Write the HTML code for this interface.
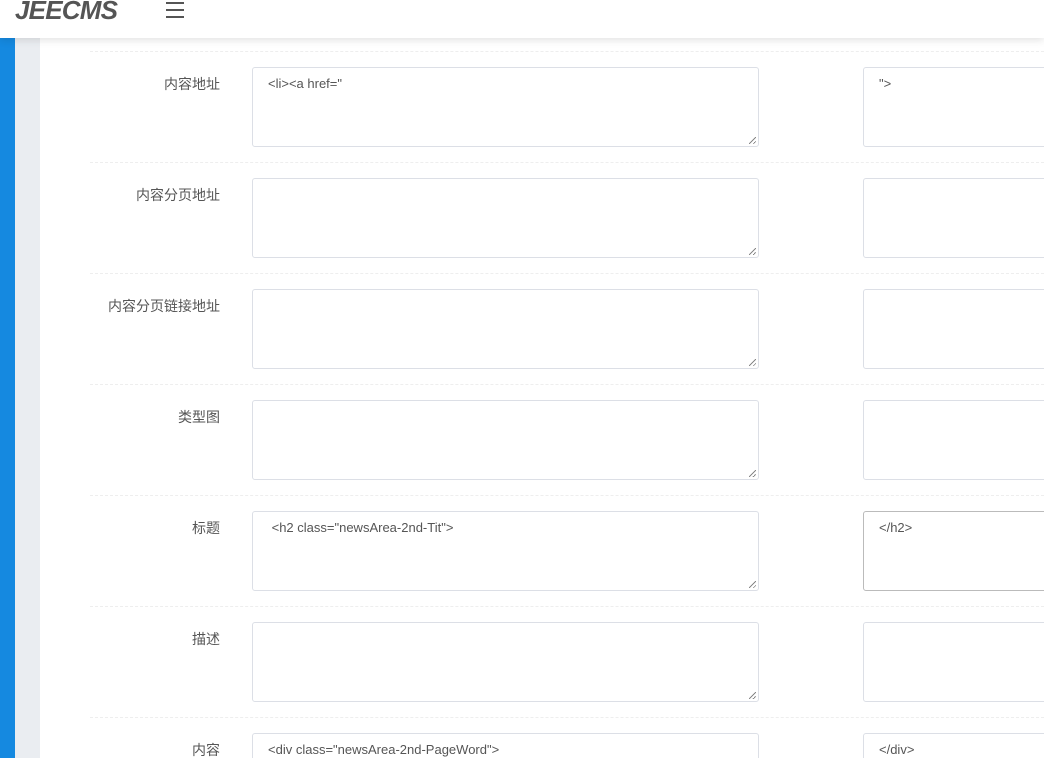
<!DOCTYPE html><html style="width:1044px;height:758px;overflow:hidden"><head><meta charset="utf-8"><style>
body{margin:0;width:1044px;height:758px;overflow:hidden;background:#fff;font-family:"Liberation Sans","Noto Sans CJK SC",sans-serif;position:relative}
.hdr{position:absolute;left:0;top:0;width:1044px;height:38px;background:#fff;box-shadow:0 2px 8px rgba(0,0,0,.12);z-index:2}
.logo{position:absolute;left:15px;top:-5px;font-size:26px;font-weight:bold;font-style:italic;color:#555;letter-spacing:-0.8px}
.ham{position:absolute;left:166px;top:2px;width:18px}
.ham i{display:block;height:2px;background:#555;margin-bottom:5px}
.sb{position:absolute;left:0;top:38px;width:15px;height:720px;background:#1589e0}
.gb{position:absolute;left:15px;top:38px;width:25px;height:720px;background:#eaedf1}
.row{position:absolute;left:90px;width:954px;height:111px;border-top:1px dashed #eee}
.lab{position:absolute;right:824px;top:22px;font-size:14px;color:#555;white-space:nowrap}
.ta{position:absolute;top:15px;border:1px solid #dcdfe6;border-radius:3px;font-size:13px;color:#555;padding:8px 0 0 15px;box-sizing:border-box;height:80px}
.a{left:162px;width:507px}.b{left:773px;width:200px}
.grip{position:absolute;right:2px;bottom:2px;width:7px;height:7px;background:linear-gradient(135deg,transparent 45%,#888 45%,#888 55%,transparent 55%,transparent 75%,#888 75%,#888 85%,transparent 85%)}
</style></head><body>
<div class="hdr"><div class="logo">JEECMS</div><div class="ham"><i></i><i></i><i></i></div></div>
<div class="sb"></div><div class="gb"></div>
<div class="row" style="top:51px"><div class="lab">内容地址</div><div class="ta a">&lt;li&gt;&lt;a href="<div class="grip"></div></div><div class="ta b">"&gt;</div></div>
<div class="row" style="top:162px"><div class="lab">内容分页地址</div><div class="ta a"><div class="grip"></div></div><div class="ta b"></div></div>
<div class="row" style="top:273px"><div class="lab">内容分页链接地址</div><div class="ta a"><div class="grip"></div></div><div class="ta b"></div></div>
<div class="row" style="top:384px"><div class="lab">类型图</div><div class="ta a"><div class="grip"></div></div><div class="ta b"></div></div>
<div class="row" style="top:495px"><div class="lab">标题</div><div class="ta a">&nbsp;&lt;h2 class="newsArea-2nd-Tit"&gt;<div class="grip"></div></div><div class="ta b" style="border-color:#bbb">&lt;/h2&gt;</div></div>
<div class="row" style="top:606px"><div class="lab">描述</div><div class="ta a"><div class="grip"></div></div><div class="ta b"></div></div>
<div class="row" style="top:717px;height:40px;overflow:hidden"><div class="lab">内容</div><div class="ta a">&lt;div class="newsArea-2nd-PageWord"&gt;</div><div class="ta b">&lt;/div&gt;</div></div>
</body></html>
